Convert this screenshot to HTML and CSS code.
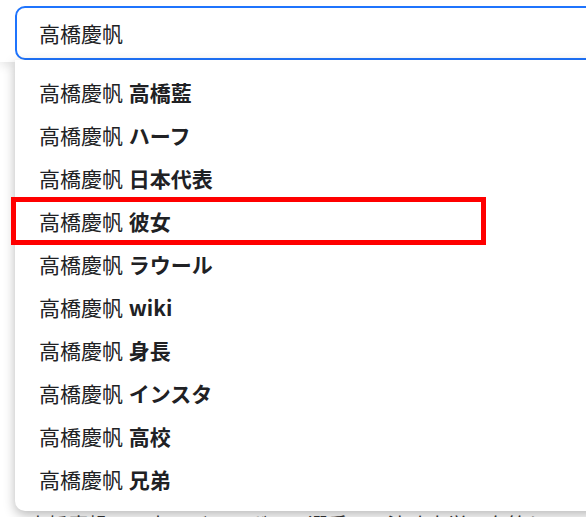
FILE: index.html
```html
<!DOCTYPE html>
<html lang="ja">
<head>
    <meta charset="UTF-8">
    <meta name="viewport" content="width=device-width, initial-scale=1.0">
    <title>高橋慶帆 - 検索</title>
    <link rel="stylesheet" href="styles.css">
</head>
<body>
    <header class="top-bar">
        <div class="search-box">
            <span class="query">高橋慶帆</span>
        </div>
    </header>

    <!-- Suggestions dropdown -->
    <ul class="suggest-list">
        <li class="suggest-item">高橋慶帆 <b>高橋藍</b></li>
        <li class="suggest-item">高橋慶帆 <b>ハーフ</b></li>
        <li class="suggest-item">高橋慶帆 <b>日本代表</b></li>
        <li class="suggest-item marked">高橋慶帆 <b>彼女</b></li>
        <li class="suggest-item">高橋慶帆 <b>ラウール</b></li>
        <li class="suggest-item">高橋慶帆 <b>wiki</b></li>
        <li class="suggest-item">高橋慶帆 <b>身長</b></li>
        <li class="suggest-item">高橋慶帆 <b>インスタ</b></li>
        <li class="suggest-item">高橋慶帆 <b>高校</b></li>
        <li class="suggest-item">高橋慶帆 <b>兄弟</b></li>
    </ul>

    <main class="content">
        <p>高橋慶帆は日本のバレーボール選手で、法政大学に在籍している。</p>
    </main>
</body>
</html>
```

FILE: styles.css
```css
body {
    margin: 0;
    font-family: "Noto Sans CJK JP", "Noto Sans", sans-serif;
    color: #202124;
    background: #fff;
    overflow: hidden;
    position: relative;
    height: 100vh;
}

.top-bar {
    height: 62px;
    padding: 6px 0 0 15px;
    box-sizing: border-box;
    box-shadow: 0 3px 10px rgba(0, 0, 0, 0.12);
    overflow: hidden;
}

.search-box {
    width: 640px;
    height: 54px;
    box-sizing: border-box;
    border: 2px solid #1f74fd;
    border-radius: 10px;
    padding-left: 22px;
    display: flex;
    align-items: center;
}

.query {
    font-size: 21px;
}

.suggest-list {
    list-style: none;
    margin: 0;
    position: absolute;
    top: 60px;
    left: 15px;
    width: 640px;
    padding: 11px 0 10px;
    background: #fff;
    border-radius: 0 0 10px 10px;
    box-shadow: 0 4px 12px rgba(0, 0, 0, 0.28);
    z-index: 2;
}

.suggest-item {
    position: relative;
    height: 43px;
    line-height: 43px;
    padding-left: 24px;
    font-size: 21px;
    white-space: nowrap;
}

.suggest-item b {
    font-weight: 700;
    margin-left: 1px;
}

/* red annotation frame */
.suggest-item.marked::after {
    content: "";
    position: absolute;
    left: -4px;
    top: -3px;
    width: 475px;
    height: 48px;
    box-sizing: border-box;
    border: 5px solid #f00;
}

.content {
    padding: 448px 0 0 28px;
}

.content p {
    margin: 0;
    font-size: 20px;
    white-space: nowrap;
    color: #333;
}
```
